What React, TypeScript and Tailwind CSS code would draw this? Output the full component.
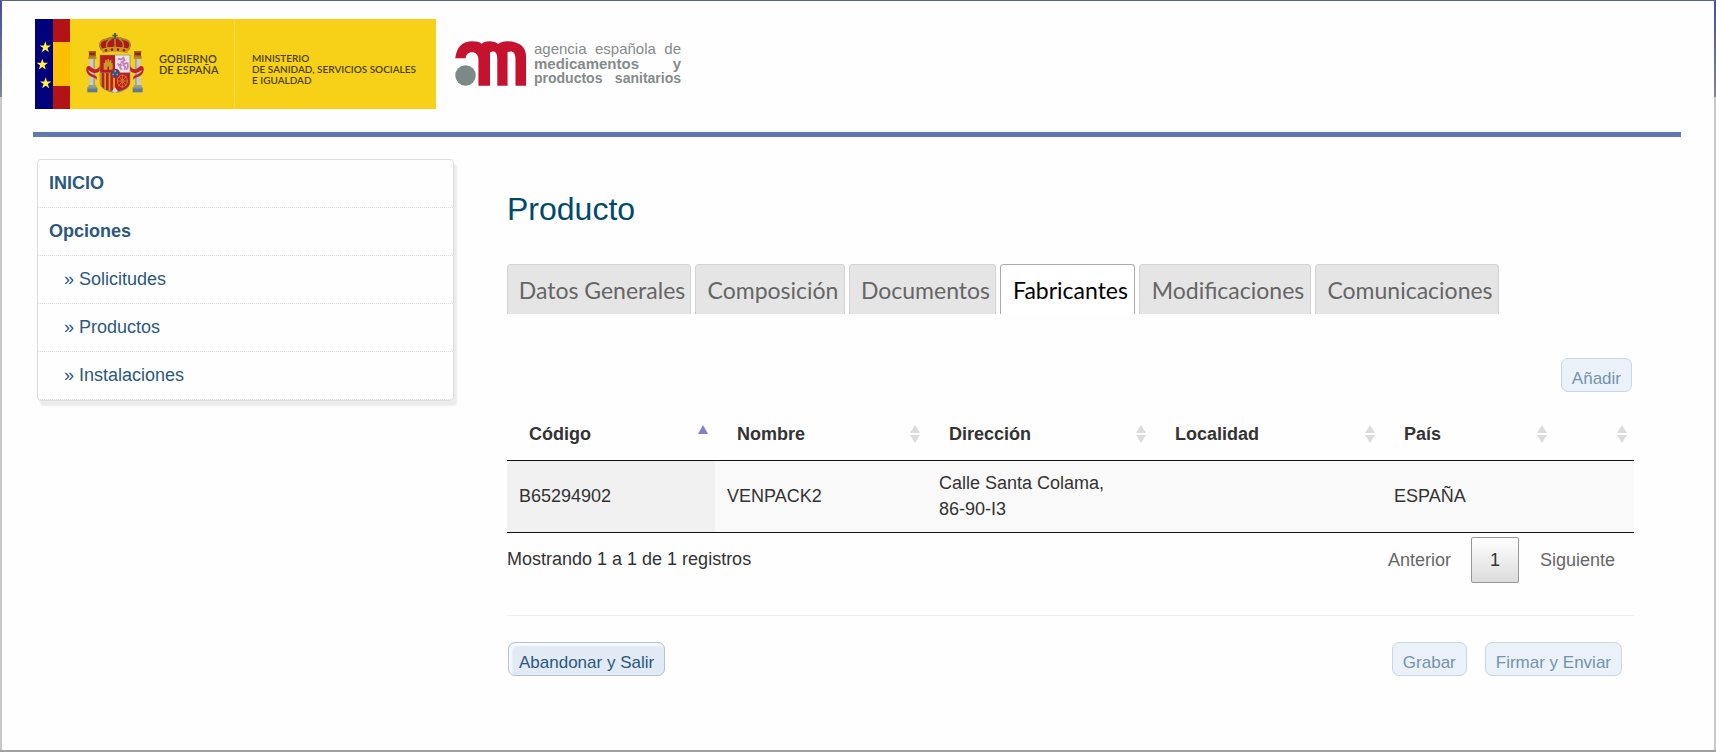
import type { ReactNode } from "react";

const STAR = "M0-18 4.2-5.6H17L6.6 2.2 10.6 14.6 0 7-10.6 14.6-6.6 2.2-17-5.6H-4.2Z";

function Flags() {
  return (
    <svg viewBox="0 0 105 270" className="h-[90px] w-[35px] shrink-0" aria-hidden="true">
      <path fill="#00007a" d="M0 0h54v270H0z" />
      <path fill="#b31217" d="M54 0h51v270H54z" />
      <path fill="#fcbf05" d="M54 69h51v132H54z" />
      <g fill="#fff04a">
        <path d={STAR} transform="translate(31 85)" />
        <path d={STAR} transform="translate(22 137)" />
        <path d={STAR} transform="translate(32 193)" />
      </g>
    </svg>
  );
}

function Pillar() {
  return (
    <g>
      <path fill="#c9ccc5" d="M10 76h17v82H10z" />
      <path fill="#9da39c" d="M22 76h5v82h-5z" />
      <path fill="#b98a1e" d="M7 70h24v8H7z" />
      <path fill="#a31a1c" d="M9 56h20v14H9z" />
      <path fill="#8b6b1c" d="M8 54h22v5H8zM10 66h18v4H10z" />
      <path fill="#9aa08c" d="M7 156h24v8H7z" />
      <path fill="#5b7d92" d="M4 164h30v14H4z" />
      <path fill="#8e958a" d="M4 163h30v4H4z" />
      <path fill="#c4202a" d="M2 102c8-8 14 2 22 6 8 3 14-3 18-10v14c-5 8-12 10-20 7-8-2-13-9-16-6 4 5 10 10 18 13 7 2 11 6 7 14-2-6-8-7-14-9C5 127-2 113 2 102z" />
    </g>
  );
}

function CoatOfArms() {
  return (
    <svg viewBox="0 0 174 180" className="h-[60px] w-[58px] shrink-0" role="img" aria-label="Escudo de España">
      <Pillar />
      <g transform="translate(174 0) scale(-1 1)">
        <Pillar />
      </g>
      <path fill="#b5161d" d="M45 52C34 32 46 18 62 17c10-7 40-7 50 0 16 1 28 15 17 35z" />
      <path fill="none" stroke="#a08a2c" strokeWidth="5" d="M48 50C34 32 46 20 61 19c10-6 18-6 26-6s16 0 26 6c15 1 27 13 13 31M64 48C58 34 64 22 76 17M110 48c6-14 0-26-12-31M87 14v34" />
      <path fill="#4f5d3a" d="M84 0h6v5h5v5h-5v8h-6v-8h-5V5h5z" />
      <path fill="#c79a1c" d="M46 47c24-8 58-8 82 0l-4 14c-22-6-52-6-74 0z" />
      <g fill="#a2171c">
        <circle cx="60" cy="52" r="4" />
        <circle cx="78" cy="50" r="4" />
        <circle cx="96" cy="50" r="4" />
        <circle cx="114" cy="52" r="4" />
      </g>
      <path fill="#7f8578" d="M41 65h92v82c0 22-26 30-46 33-20-3-46-11-46-33z" />
      <path fill="#bd1a22" d="M43 67h44v52H43z" />
      <path fill="#e9e3e6" d="M87 67h44v52H87z" />
      <path fill="#dd9a22" d="M43 119h44v57c-22-3-44-10-44-29z" />
      <path fill="#b5251f" d="M47 119h8v48l-8-7zM60 119h8v53l-8-2zM73 119h8v56l-8-2z" />
      <path fill="#bd1a22" d="M87 119h44v28c0 19-22 26-44 29z" />
      <path fill="#c89a25" d="M53 110V90h4v-9h5v5h2v-8h5v8h2v-5h5v9h4v20H69v-9h-5v9z" />
      <path fill="none" stroke="#c47abb" strokeWidth="5" d="M96 77l10 3 6-6 4 8-9 5 8 6 8-4M106 92l-8 5-3-6M110 94l8 8-3 9M106 94l-4 9 5 7M121 110c10-8 2-14 4-22" />
      <path fill="none" stroke="#cf7a25" strokeWidth="3" d="M98 129l22 28M122 128l-25 32M109 126v38M94 144h31" />
      <ellipse cx="109" cy="144" rx="15" ry="18" fill="none" stroke="#cf7a25" strokeWidth="3" />
      <circle cx="88" cy="121" r="14" fill="#b5252c" />
      <circle cx="88" cy="121" r="11" fill="#25508f" />
      <path fill="#b8a25a" d="M85 112h5v6h-5zM79 122h5v5h-5zM91 122h5v5h-5z" />
      <path fill="#d7d8cc" d="M87 163l9 12-9 5-9-5z" />
    </svg>
  );
}

function AgencyMark() {
  return (
    <svg viewBox="0 0 216 136" className="h-[45px] w-[72px] shrink-0" aria-hidden="true">
      <path
        fill="#c4122f"
        d="M0 52C4 18 22 1 52 1c12 0 21 2 28 7C87 3 94 1 103 1c12 0 20 3 27 8 7-5 15-8 26-8 36 0 58 16 58 46v88h-32V54c0-14-5-22-15-22-4 0-7 1-9 2v101h-31V54c0-14-4-22-13-22-4 0-7 1-9 3v100H70V56c0-14-8-22-20-22-11 0-17 7-19 18z"
      />
      <circle cx="31" cy="104" r="31" fill="#7d8986" />
    </svg>
  );
}

const BUTTON_BASE = "h-[34px] rounded-[7px] border px-[10px] pt-[7px] text-[17px] leading-5";

function ActionButton({ children, disabled = false }: { children: ReactNode; disabled?: boolean }) {
  return (
    <button
      type="button"
      disabled={disabled}
      className={
        disabled
          ? `${BUTTON_BASE} border-[#c8d6e5] bg-[#ebf1f8] text-[#7593ad]`
          : `${BUTTON_BASE} border-[#afc2d8] bg-[#e1eaf5] text-[#2b587f] shadow-[inset_3px_3px_2px_#f8fafd]`
      }
    >
      {children}
    </button>
  );
}

function SortIcon({ ascending = false }: { ascending?: boolean }) {
  return (
    <svg viewBox="0 0 10 18" className="h-[18px] w-[10px] shrink-0" aria-hidden="true">
      {ascending ? (
        <path fill="#8080cc" d="M5 0l5 9H0z" />
      ) : (
        <path fill="#dcdcdc" d="M5 0l5 8H0zM0 10h10l-5 8z" />
      )}
    </svg>
  );
}

const TABS = [
  { label: "Datos Generales", width: "w-[184px]" },
  { label: "Composición", width: "w-[150px]" },
  { label: "Documentos", width: "w-[147px]" },
  { label: "Fabricantes", width: "w-[135px]" },
  { label: "Modificaciones", width: "w-[172px]" },
  { label: "Comunicaciones", width: "w-[184px]" },
];
const ACTIVE_TAB = "Fabricantes";

const COLUMNS = [
  { label: "Código", width: "w-[208px]" },
  { label: "Nombre", width: "w-[212px]" },
  { label: "Dirección", width: "w-[226px]" },
  { label: "Localidad", width: "w-[229px]" },
  { label: "País", width: "w-[172px]" },
  { label: "", width: "w-[80px]" },
];

const MENU = ["Solicitudes", "Productos", "Instalaciones"];
const MENU_ROW = "flex h-12 items-center border-b border-dotted border-[#ddd] pb-px";

export default function App() {
  return (
    <div className="flex min-h-screen flex-col border-t border-[#5a648a] bg-[linear-gradient(#454f9c,#7d8794_96px,#c8c8c8_96px,#c8c8c8_calc(100%-2px),#a0a0a0_calc(100%-2px))] px-[2px] pb-[2px] font-['Liberation_Sans',Arial,sans-serif] text-[18px] text-[#333]">
      <div className="flex-1 bg-[#fefefe] pr-[33px] pl-[31px]">
        <header className="flex h-[136px] border-b-[5px] border-[#6279b0] pt-[18px] pl-[2px]">
          <div className="flex h-[90px] w-[401px] bg-[#f7d117] font-[Lato,sans-serif] text-[11px] leading-[11px] font-semibold text-[#4a3f0c]">
            <Flags />
            <div className="flex w-[165px] border-r border-[#f9dc4e] pt-[14px] pl-4">
              <CoatOfArms />
              <p className="pt-5 pl-[15px] whitespace-nowrap">
                GOBIERNO
                <br />
                DE ESPAÑA
              </p>
            </div>
            <p className="pt-[34px] pl-[17px] text-[10px] whitespace-nowrap">
              MINISTERIO
              <br />
              DE SANIDAD, SERVICIOS SOCIALES
              <br />
              E IGUALDAD
            </p>
          </div>
          <div className="flex pt-[22px] pl-[19px]">
            <AgencyMark />
            <div className="ml-[7px] w-[147px] text-[14px] leading-[15px] text-[#858b8a]">
              <p className="text-[15px] whitespace-nowrap [text-align-last:justify]">agencia española de</p>
              <p className="text-[15px] font-bold [text-align-last:justify]">medicamentos y</p>
              <p className="font-bold [text-align-last:justify]">productos sanitarios</p>
            </div>
          </div>
        </header>

        <div className="flex items-start pl-1">
          <nav className="mt-[22px] w-[417px] shrink-0 rounded-[4px] border border-[#ddd] text-[#2b587f] shadow-[3px_5px_2px_#ebebeb]">
            <a href="#inicio" className={`${MENU_ROW} pl-[11px] font-bold`}>
              INICIO
            </a>
            <a href="#opciones" className={`${MENU_ROW} pl-[11px] font-bold`}>
              Opciones
            </a>
            <ul>
              {MENU.map((item) => (
                <li key={item}>
                  <a href={`#${item.toLowerCase()}`} className={`${MENU_ROW} pl-[26px]`}>
                    » {item}
                  </a>
                </li>
              ))}
            </ul>
          </nav>

          <main className="ml-[53px] min-w-0 flex-1 pr-[47px]">
            <h1 className="mt-[54px] text-[32px] leading-9 text-[#00496b]">Producto</h1>

            <div role="tablist" className="mt-[37px] flex gap-1 font-[Lato,sans-serif] text-[23px]">
              {TABS.map((tab) => {
                const active = tab.label === ACTIVE_TAB;
                return (
                  <button
                    key={tab.label}
                    type="button"
                    role="tab"
                    aria-selected={active}
                    className={`${tab.width} h-[50px] shrink-0 rounded-t-[4px] border border-b-0 pt-[2px] pl-[6px] text-center whitespace-nowrap ${
                      active ? "border-[#aaa] bg-white text-black" : "border-[#d3d3d3] bg-[#e5e5e5] text-[#666]"
                    }`}
                  >
                    {tab.label}
                  </button>
                );
              })}
            </div>

            <div className="mt-11 flex justify-end pr-[2px]">
              <ActionButton disabled>Añadir</ActionButton>
            </div>

            <table className="mt-[18px] w-full table-fixed border-separate border-spacing-0 text-left">
              <thead>
                <tr>
                  {COLUMNS.map((column, index) => (
                    <th
                      key={index}
                      scope="col"
                      aria-sort={index === 0 ? "ascending" : undefined}
                      className={`${column.width} h-[51px] border-b border-[#111] pr-[7px] pb-[2px] pl-[22px]`}
                    >
                      <div className="flex items-center justify-between">
                        {column.label}
                        <span className="ml-auto">
                          <SortIcon ascending={index === 0} />
                        </span>
                      </div>
                    </th>
                  ))}
                </tr>
              </thead>
              <tbody>
                <tr className="bg-[#f9f9f9]">
                  <td className="h-[72px] border-b border-[#111] bg-[#f1f1f1] px-3">B65294902</td>
                  <td className="border-b border-[#111] px-3">VENPACK2</td>
                  <td className="border-b border-[#111] px-3 pb-[2px] leading-[26px]">
                    Calle Santa Colama, <span className="whitespace-nowrap">86-90-I3</span>
                  </td>
                  <td className="border-b border-[#111] px-3" />
                  <td className="border-b border-[#111] px-3">ESPAÑA</td>
                  <td className="border-b border-[#111] px-3" />
                </tr>
              </tbody>
            </table>

            <div className="mt-1 flex items-center justify-between">
              <p className="pb-[2px]">Mostrando 1 a 1 de 1 registros</p>
              <div className="flex items-center text-[#666]">
                <button type="button" disabled className="px-5">
                  Anterior
                </button>
                <button
                  type="button"
                  aria-current="page"
                  className="h-[46px] w-12 rounded-[2px] border border-[#979797] bg-linear-to-b from-white to-[#dcdcdc] text-[#333]"
                >
                  1
                </button>
                <button type="button" disabled className="pr-[19px] pl-[21px]">
                  Siguiente
                </button>
              </div>
            </div>

            <div className="mt-8 flex items-center justify-between border-t border-[#eee] pt-[26px] pr-3 pb-10 pl-px">
              <ActionButton>Abandonar y Salir</ActionButton>
              <div className="flex gap-[18px]">
                <ActionButton disabled>Grabar</ActionButton>
                <ActionButton disabled>Firmar y Enviar</ActionButton>
              </div>
            </div>
          </main>
        </div>
      </div>
    </div>
  );
}
